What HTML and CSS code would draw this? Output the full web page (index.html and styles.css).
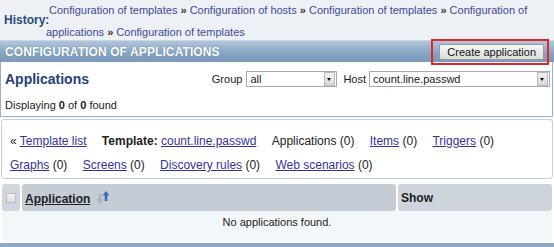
FILE: index.html
```html
<!DOCTYPE html>
<html lang="en">
<head>
    <meta charset="UTF-8">
    <title>Configuration of applications</title>
    <link rel="stylesheet" href="styles.css">
</head>
<body>
    <div class="history">
        <span class="history-label">History:</span>
        <div class="history-links">
            <a href="#" class="first">Configuration of templates</a> <span class="sep">&raquo;</span>
            <a href="#">Configuration of hosts</a> <span class="sep">&raquo;</span>
            <a href="#">Configuration of templates</a> <span class="sep">&raquo;</span>
            <a href="#">Configuration of applications</a> <span class="sep">&raquo;</span>
            <a href="#">Configuration of templates</a>
        </div>
    </div>

    <div class="header-bar">
        <span class="header-title">CONFIGURATION OF APPLICATIONS</span>
        <button class="create-btn">Create application</button>
    </div>

    <div class="filter-panel">
        <div class="filter-row">
            <h2>Applications</h2>
            <div class="filters">
                <span class="filter-label">Group</span>
                <div class="select group-select"><span class="select-value">all</span><span class="select-arrow"></span></div>
                <span class="filter-label">Host</span>
                <div class="select host-select"><span class="select-value">count.line.passwd</span><span class="select-arrow"></span></div>
            </div>
        </div>
        <div class="count">Displaying <b>0</b> of <b>0</b> found</div>
    </div>

    <div class="nav-box">
        <span class="nav-item">&laquo; <a href="#">Template list</a></span>
        <span class="nav-item"><b>Template:</b> <a href="#">count.line.passwd</a></span>
        <span class="nav-item">Applications (0)</span>
        <span class="nav-item"><a href="#">Items</a> (0)</span>
        <span class="nav-item"><a href="#">Triggers</a> (0)</span>
        <span class="nav-item"><a href="#">Graphs</a> (0)</span>
        <span class="nav-item"><a href="#">Screens</a> (0)</span>
        <span class="nav-item"><a href="#">Discovery rules</a> (0)</span>
        <span class="nav-item"><a href="#">Web scenarios</a> (0)</span>
    </div>

    <table class="list-table">
        <thead>
            <tr>
                <th class="col-check"><span class="checkbox"></span></th>
                <th class="col-name">
                    <a href="#">Application</a>
                    <svg class="sort-icon" width="14" height="15" viewBox="0 0 14 15">
                        <path d="M4 4v6" stroke="#aeb4bb" stroke-width="3"/>
                        <path d="M0 9h8L4 14z" fill="#aeb4bb"/>
                        <path d="M10 11V5" stroke="#3a6cb6" stroke-width="2.6"/>
                        <path d="M6.5 5.5h7L10 1z" fill="#3a6cb6"/>
                    </svg>
                </th>
                <th class="col-show">Show</th>
            </tr>
        </thead>
        <tbody>
            <tr>
                <td colspan="3" class="empty">No applications found.</td>
            </tr>
        </tbody>
    </table>

    <div class="footer-bar"></div>
</body>
</html>
```

FILE: styles.css
```css
body {
    margin: 0;
    background: #fff;
    font-family: "Liberation Sans", Arial, sans-serif;
    font-size: 11px;
    color: #222;
}
a {
    color: #3a3f9e;
}

/* history */
.history {
    display: flex;
    align-items: center;
    height: 40px;
    background: #edf0f4;
    overflow: hidden;
}
.history-label {
    font-weight: bold;
    font-size: 12px;
    color: #274b78;
    padding-left: 4px;
    width: 42px;
}
.history-links {
    line-height: 22px;
    padding-right: 16px;
    margin-top: 1px;
}
.history-links a {
    text-decoration: none;
    color: #3f4a98;
}
.history-links .first {
    margin-left: 3px;
}
.sep {
    font-weight: bold;
    color: #333;
}

/* header */
.header-bar {
    display: flex;
    align-items: center;
    justify-content: space-between;
    height: 22px;
    padding: 0 10px 0 5px;
    background: linear-gradient(#b2c6da, #86a3c2 60%, #7b99ba);
    border-top: 1px solid #c9d6e3;
    box-sizing: border-box;
}
.header-title {
    color: #fff;
    font-weight: bold;
    font-size: 12px;
    letter-spacing: 0.1px;
    text-shadow: 0 0 1px #4d6d92;
}
.create-btn {
    position: relative;
    font-family: "Liberation Sans", Arial, sans-serif;
    font-size: 11px;
    color: #111;
    height: 16px;
    padding: 0 7px;
    line-height: 14px;
    border: 1px solid #9a9a9a;
    border-radius: 2px;
    background: linear-gradient(#f7f7f7, #dcdcdc);
}
.create-btn::after {
    content: "";
    position: absolute;
    top: -6px;
    bottom: -6px;
    left: -9px;
    right: -6px;
    border: 2px solid #e3242b;
}

/* filter panel */
.filter-panel {
    border: 1px solid #98b0c8;
    border-top: none;
    margin-right: 1px;
    padding: 0 2px 0 4px;
    height: 54px;
}
.filter-row {
    display: flex;
    align-items: center;
    justify-content: space-between;
    height: 34px;
}
.filter-row h2 {
    margin: 0;
    font-size: 14px;
    color: #1f3f7a;
}
.filters {
    display: flex;
    align-items: center;
    gap: 4px;
}
.filter-label {
    font-size: 11px;
    color: #222;
}
.select {
    display: flex;
    align-items: center;
    height: 16px;
    border: 1px solid #a5acb5;
    background: #fff;
    box-sizing: border-box;
    font-size: 11px;
}
.group-select {
    width: 91px;
    margin-right: 2px;
}
.host-select {
    width: 181px;
    margin-left: -1px;
}
.select-value {
    flex: 1;
    padding-left: 3px;
}
.select-arrow {
    width: 9px;
    height: 12px;
    margin-right: 1px;
    background: linear-gradient(#f2f2f2, #d8d8d8);
    border: 1px solid #b8b8b8;
    position: relative;
}
.select-arrow::after {
    content: "";
    position: absolute;
    left: 2px;
    top: 5px;
    border-left: 2.5px solid transparent;
    border-right: 2.5px solid transparent;
    border-top: 3px solid #111;
}
.count {
    line-height: 18px;
}

/* navigation box */
.nav-box {
    margin: 2px 1px 0 1px;
    border: 1px solid #c2cfdc;
    border-radius: 3px;
    padding: 9px 0 0 8px;
    height: 49px;
    font-size: 12px;
    line-height: 24px;
}
.nav-item {
    display: inline-block;
    margin-right: 12px;
}
.nav-box a {
    color: #33339c;
}

/* table */
.list-table {
    width: 100%;
    margin-top: 5px;
    border-collapse: separate;
    border-spacing: 2px 0;
    font-size: 12px;
}
.list-table th {
    height: 27px;
    text-align: left;
    background: #c4cdd6;
    border-radius: 3px;
    padding: 0 3px;
}
.list-table .col-check {
    width: 10px;
    background: #cfd6de;
    padding: 0 4px;
}
.list-table .col-show {
    width: 148px;
    background: #cdd4dc;
}
.col-name a {
    color: #222;
}
.sort-icon {
    vertical-align: -2px;
    margin-left: 2px;
}
.checkbox {
    display: block;
    width: 8px;
    height: 8px;
    border: 1px solid #b9bec4;
    background: linear-gradient(#f4f4f4, #dedede);
}
.empty {
    padding: 4px 0 12px;
    line-height: 14px;
    text-align: center;
    font-size: 11px;
    background: #f3f7fa;
}
.footer-bar {
    margin-top: 2px;
    height: 6px;
    background: #8ea9c5;
}
```
